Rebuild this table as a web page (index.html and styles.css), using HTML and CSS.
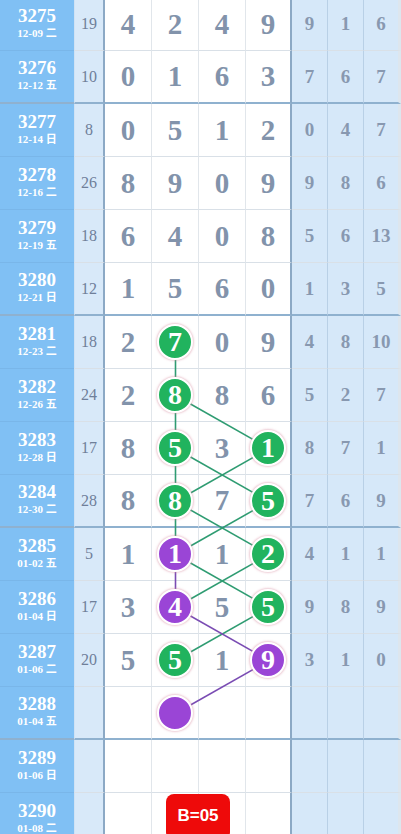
FILE: index.html
```html
<!DOCTYPE html>
<html>
<head>
<meta charset="utf-8">
<link rel="stylesheet" href="styles.css">
</head>
<body>
<div class="page">
  <div class="board">
    <div class="row"><div class="iss"><b>3275</b><span>12-09 二</span></div><div class="sum">19</div><div class="d">4</div><div class="d">2</div><div class="d">4</div><div class="d d4">9</div><div class="r">9</div><div class="r">1</div><div class="r">6</div></div>
    <div class="row grp"><div class="iss"><b>3276</b><span>12-12 五</span></div><div class="sum">10</div><div class="d">0</div><div class="d">1</div><div class="d">6</div><div class="d d4">3</div><div class="r">7</div><div class="r">6</div><div class="r">7</div></div>
    <div class="row"><div class="iss"><b>3277</b><span>12-14 日</span></div><div class="sum">8</div><div class="d">0</div><div class="d">5</div><div class="d">1</div><div class="d d4">2</div><div class="r">0</div><div class="r">4</div><div class="r">7</div></div>
    <div class="row"><div class="iss"><b>3278</b><span>12-16 二</span></div><div class="sum">26</div><div class="d">8</div><div class="d">9</div><div class="d">0</div><div class="d d4">9</div><div class="r">9</div><div class="r">8</div><div class="r">6</div></div>
    <div class="row"><div class="iss"><b>3279</b><span>12-19 五</span></div><div class="sum">18</div><div class="d">6</div><div class="d">4</div><div class="d">0</div><div class="d d4">8</div><div class="r">5</div><div class="r">6</div><div class="r">13</div></div>
    <div class="row grp"><div class="iss"><b>3280</b><span>12-21 日</span></div><div class="sum">12</div><div class="d">1</div><div class="d">5</div><div class="d">6</div><div class="d d4">0</div><div class="r">1</div><div class="r">3</div><div class="r">5</div></div>
    <div class="row"><div class="iss"><b>3281</b><span>12-23 二</span></div><div class="sum">18</div><div class="d">2</div><div class="d"><i class="ball g">7</i></div><div class="d">0</div><div class="d d4">9</div><div class="r">4</div><div class="r">8</div><div class="r">10</div></div>
    <div class="row"><div class="iss"><b>3282</b><span>12-26 五</span></div><div class="sum">24</div><div class="d">2</div><div class="d"><i class="ball g">8</i></div><div class="d">8</div><div class="d d4">6</div><div class="r">5</div><div class="r">2</div><div class="r">7</div></div>
    <div class="row"><div class="iss"><b>3283</b><span>12-28 日</span></div><div class="sum">17</div><div class="d">8</div><div class="d"><i class="ball g">5</i></div><div class="d">3</div><div class="d d4"><i class="ball g">1</i></div><div class="r">8</div><div class="r">7</div><div class="r">1</div></div>
    <div class="row grp"><div class="iss"><b>3284</b><span>12-30 二</span></div><div class="sum">28</div><div class="d">8</div><div class="d"><i class="ball g">8</i></div><div class="d">7</div><div class="d d4"><i class="ball g">5</i></div><div class="r">7</div><div class="r">6</div><div class="r">9</div></div>
    <div class="row"><div class="iss"><b>3285</b><span>01-02 五</span></div><div class="sum">5</div><div class="d">1</div><div class="d"><i class="ball p">1</i></div><div class="d">1</div><div class="d d4"><i class="ball g">2</i></div><div class="r">4</div><div class="r">1</div><div class="r">1</div></div>
    <div class="row"><div class="iss"><b>3286</b><span>01-04 日</span></div><div class="sum">17</div><div class="d">3</div><div class="d"><i class="ball p">4</i></div><div class="d">5</div><div class="d d4"><i class="ball g">5</i></div><div class="r">9</div><div class="r">8</div><div class="r">9</div></div>
    <div class="row"><div class="iss"><b>3287</b><span>01-06 二</span></div><div class="sum">20</div><div class="d">5</div><div class="d"><i class="ball g">5</i></div><div class="d">1</div><div class="d d4"><i class="ball p">9</i></div><div class="r">3</div><div class="r">1</div><div class="r">0</div></div>
    <div class="row grp"><div class="iss"><b>3288</b><span>01-04 五</span></div><div class="sum"></div><div class="d"></div><div class="d"><i class="ball p"></i></div><div class="d"></div><div class="d d4"></div><div class="r"></div><div class="r"></div><div class="r"></div></div>
    <div class="row"><div class="iss"><b>3289</b><span>01-06 日</span></div><div class="sum"></div><div class="d"></div><div class="d"></div><div class="d"></div><div class="d d4"></div><div class="r"></div><div class="r"></div><div class="r"></div></div>
    <div class="row"><div class="iss"><b>3290</b><span>01-08 二</span></div><div class="sum"></div><div class="d"></div><div class="d"></div><div class="d"></div><div class="d d4"></div><div class="r"></div><div class="r"></div><div class="r"></div></div>
  </div>
  <svg class="links" width="401" height="834" viewBox="0 0 401 834">
    <g stroke="#2f9c72" stroke-width="1.6" fill="none">
      <line x1="175.5" y1="342.5" x2="175.5" y2="395.5"/>
      <line x1="175.5" y1="395.5" x2="175.5" y2="448.5"/>
      <line x1="175.5" y1="448.5" x2="175.5" y2="501.5"/>
      <line x1="175.5" y1="501.5" x2="175.5" y2="554.5"/>
      <line x1="175.5" y1="395.5" x2="269" y2="448.5"/>
      <line x1="269" y1="448.5" x2="175.5" y2="501.5"/>
      <line x1="175.5" y1="448.5" x2="269" y2="501.5"/>
      <line x1="175.5" y1="501.5" x2="269" y2="554.5"/>
      <line x1="269" y1="501.5" x2="175.5" y2="554.5"/>
      <line x1="175.5" y1="554.5" x2="269" y2="607.5"/>
      <line x1="269" y1="554.5" x2="175.5" y2="607.5"/>
      <line x1="269" y1="607.5" x2="175.5" y2="660.5"/>
    </g>
    <g stroke="#7a4cb3" stroke-width="1.6" fill="none">
      <line x1="175.5" y1="554.5" x2="175.5" y2="607.5"/>
      <line x1="175.5" y1="607.5" x2="269" y2="660.5"/>
      <line x1="269" y1="660.5" x2="175.5" y2="713.5"/>
    </g>
  </svg>
  <div class="badge">B=05</div>
</div>
</body>
</html>
```

FILE: styles.css
```css
html, body {
  margin: 0;
  padding: 0;
  background: #ffffff;
}
.page {
  position: relative;
  width: 401px;
  height: 834px;
  overflow: hidden;
}
.board {
  margin-top: -2px;
  display: flex;
  flex-direction: column;
}
.row {
  display: grid;
  grid-template-columns: 74px 31px 47px 47px 47px 46px 36px 36px 37px;
  height: 53px;
}
.row > div {
  box-sizing: border-box;
  border-bottom: 1px solid #d9e0e7;
  display: flex;
  align-items: center;
  justify-content: center;
}
.row.grp > div {
  border-bottom: 2px solid #8fb1cf;
}
.iss {
  background: #80c0f4;
  flex-direction: column;
  color: #ffffff;
  font-family: "Liberation Serif", "Noto Sans CJK SC", serif;
  font-weight: bold;
  padding-bottom: 4px;
}
.row > .iss {
  border-bottom-color: #79b6e9;
}
.iss b {
  font-size: 19px;
  line-height: 21px;
}
.iss span {
  font-size: 11px;
  line-height: 14px;
}
.sum {
  background: #d8e9f9;
  border-left: 1px solid #cfe2f4;
  border-right: 2px solid #8ca9c5;
  color: #6f7f99;
  font-family: "Liberation Serif", serif;
  font-size: 16px;
}
.d {
  background: #ffffff;
  border-right: 1px solid #e1e6eb;
  color: #8293ab;
  font-family: "Liberation Serif", serif;
  font-weight: bold;
  font-size: 29px;
}
.d.d4 {
  border-right: 2px solid #8ca9c5;
}
.r {
  background: #d6e8f9;
  border-right: 1px solid #b9d0e6;
  color: #8898b0;
  font-family: "Liberation Serif", serif;
  font-weight: bold;
  font-size: 19px;
}
.row > .r:last-child {
  border-right: 3px solid #dde6ee;
}
.ball {
  position: relative;
  z-index: 2;
  box-sizing: border-box;
  width: 36px;
  height: 36px;
  border-radius: 50%;
  border: 2px solid #ffffff;
  box-shadow: 0 0 2px 1px rgba(214, 140, 160, 0.45);
  display: flex;
  align-items: center;
  justify-content: center;
  color: #ffffff;
  font-style: normal;
  font-family: "Liberation Serif", serif;
  font-weight: bold;
  font-size: 28px;
  line-height: 1;
}
.ball.g {
  background: #21b35e;
}
.ball.p {
  background: #9a45d6;
}
.links {
  position: absolute;
  left: 0;
  top: 0;
  z-index: 1;
  pointer-events: none;
}
.badge {
  position: absolute;
  z-index: 3;
  left: 166px;
  top: 794px;
  width: 64px;
  height: 46px;
  border-radius: 8px;
  background: #ee0a0a;
  color: #ffffff;
  font-family: "Liberation Sans", Arial, sans-serif;
  font-weight: bold;
  font-size: 17px;
  display: flex;
  justify-content: center;
  padding-top: 12px;
  box-sizing: border-box;
}
```
